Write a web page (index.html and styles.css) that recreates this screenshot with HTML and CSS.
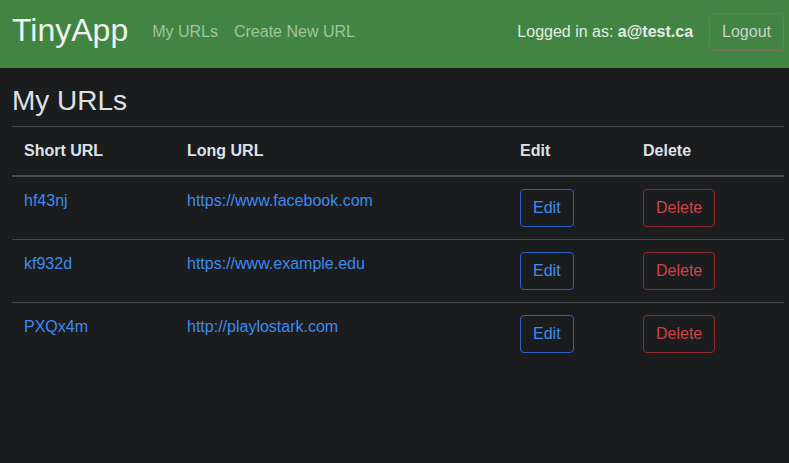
FILE: index.html
```html
<!DOCTYPE html>
<html lang="en">
<head>
<meta charset="utf-8">
<title>TinyApp</title>
<link rel="stylesheet" href="styles.css">
</head>
<body>
<nav class="navbar">
  <a class="brand" href="#">TinyApp</a>
  <div class="nav-links">
    <a class="nav-link" href="#">My URLs</a>
    <a class="nav-link" href="#">Create New URL</a>
  </div>
  <div class="nav-right">
    <span class="user">Logged in as: <b>a@test.ca</b></span>
    <button class="btn btn-logout">Logout</button>
  </div>
</nav>
<main class="container">
  <h3 class="title">My URLs</h3>
  <table class="table">
    <colgroup>
      <col class="c1"><col class="c2"><col class="c3"><col class="c4">
    </colgroup>
    <thead>
      <tr><th>Short URL</th><th>Long URL</th><th>Edit</th><th>Delete</th></tr>
    </thead>
    <tbody>
      <tr>
        <td><a href="#">hf43nj</a></td>
        <td><a href="#">https://www.facebook.com</a></td>
        <td><button class="btn btn-edit">Edit</button></td>
        <td><button class="btn btn-delete">Delete</button></td>
      </tr>
      <tr>
        <td><a href="#">kf932d</a></td>
        <td><a href="#">https://www.example.edu</a></td>
        <td><button class="btn btn-edit">Edit</button></td>
        <td><button class="btn btn-delete">Delete</button></td>
      </tr>
      <tr>
        <td><a href="#">PXQx4m</a></td>
        <td><a href="#">http://playlostark.com</a></td>
        <td><button class="btn btn-edit">Edit</button></td>
        <td><button class="btn btn-delete">Delete</button></td>
      </tr>
    </tbody>
  </table>
</main>
</body>
</html>
```
FILE: styles.css
```css
* { box-sizing: border-box; }
html, body { margin: 0; padding: 0; }
body {
  background: #1b1c1e;
  color: #dee2e6;
  font-family: "Liberation Sans", Arial, sans-serif;
  font-size: 16px;
  line-height: 1.5;
}
a { text-decoration: none; }
.navbar {
  height: 68px;
  background: #428542;
  display: flex;
  align-items: center;
  padding: 13px 5px 17px 12px;
}
.brand {
  font-size: 32px;
  line-height: 38px;
  color: #eef2ee;
  margin-right: 24px;
  padding-bottom: 5px;
}
.nav-links { display: flex; gap: 16px; }
.nav-link { color: #a3c3a3; line-height: 24px; }
.nav-right { margin-left: auto; display: flex; align-items: center; }
.user { color: #e4ebe4; margin-right: 16px; }
.user b { font-weight: bold; }
.btn {
  font-family: inherit;
  font-size: 16px;
  line-height: 24px;
  padding: 6px 12px;
  border-radius: 4px;
  background: transparent;
  cursor: pointer;
}
.btn-logout { border: 1px solid #7c7068; color: #c9d3c9; }
.btn-edit { border: 1px solid #2a62c4; color: #3f8cf0; }
.btn-delete { border: 1px solid #8f2930; color: #d0434b; }
.container { padding: 0 5px 0 12px; }
.title {
  font-size: 28px;
  font-weight: 500;
  line-height: 1.2;
  margin: 16px 0 8px;
  color: #dde1e4;
}
.table { width: 772px; border-collapse: collapse; }
.c1 { width: 163px; }
.c2 { width: 333px; }
.c3 { width: 123px; }
.c4 { width: 153px; }
.table th, .table td {
  padding: 12px;
  text-align: left;
  vertical-align: top;
  border-top: 1px solid #444649;
}
.table thead th {
  font-weight: bold;
  border-bottom: 2px solid #4a4c4f;
  color: #dee2e6;
}
.table td a { color: #3d8bf0; }
```
